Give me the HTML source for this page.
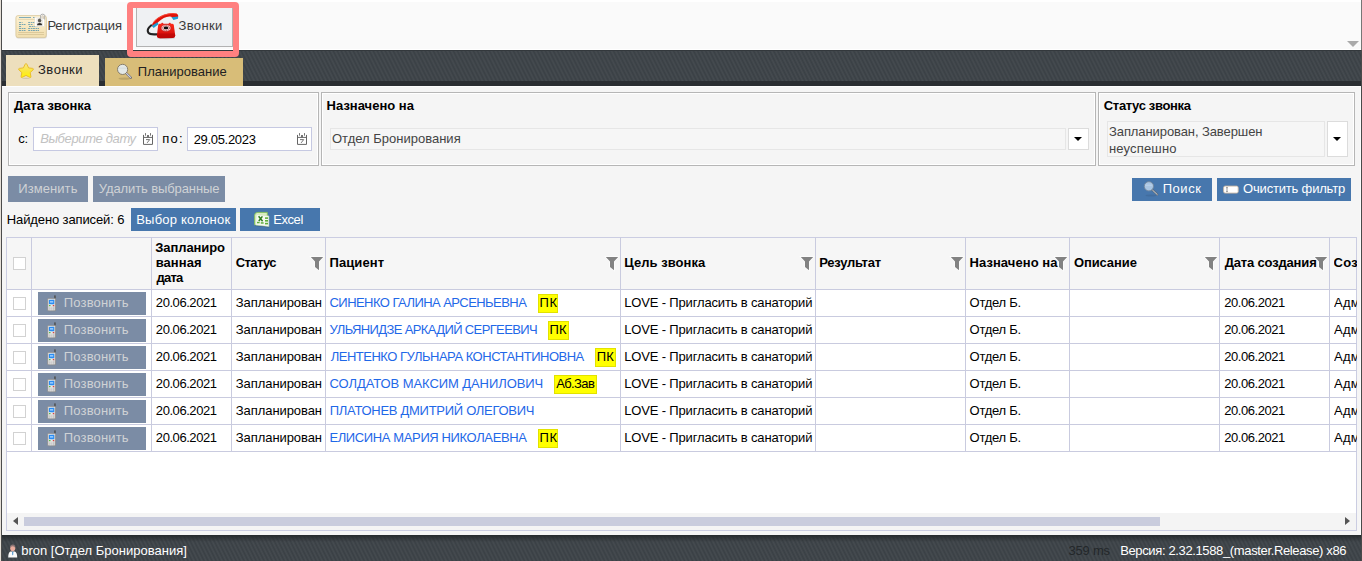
<!DOCTYPE html>
<html lang="ru"><head><meta charset="utf-8"><title>Звонки</title>
<style>
html,body{margin:0;padding:0}
body{width:1362px;height:561px;overflow:hidden;position:relative;background:#f5f5f5;
 font-family:"Liberation Sans",sans-serif;font-size:13px;color:#000}
div,span{box-sizing:border-box}
.a{position:absolute}
.t{position:absolute;white-space:nowrap;line-height:16px;height:16px;font-size:13px;display:block}
.tg{color:#3a3a3a}
.tt{color:#222}
.b{font-weight:bold;color:#000}
.n{color:#000}
.ph{font-style:italic;color:#c2c2c2}
.sg{color:#444}
.bd{color:#cfd2d5}
.bw{color:#fff}
.lk{color:#1f68e8}
.w{color:#fff}
.dim{color:#23272a}
.hatch{background-color:#3a4045;background-image:repeating-linear-gradient(63.4deg,rgba(255,255,255,0) 0,rgba(255,255,255,.06) 1.79px,rgba(255,255,255,0) 3.58px)}
.panel{position:absolute;top:92px;height:74px;border:1px solid #b6b6b6;box-shadow:inset 0 0 0 1px #fff}
.inp{position:absolute;top:127px;height:24px;width:125px;background:#fff;border:1px solid #c6c9e2}
.seld{position:absolute;border:1px solid #e6e6e6;background:#f6f6f6}
.selb{position:absolute;border:1px solid #dcdcdc;background:#fff}
.selb:after{content:"";position:absolute;left:50%;top:50%;margin:-2px 0 0 -4.5px;border:4.5px solid transparent;border-top:4.5px solid #000;border-bottom:0}
.btn{position:absolute;background:#4777ad}
.btn.dis{background:#7b8ca5}
.vl{position:absolute;width:1px;background:#c9cbdf;top:237px;height:215px}
.hl{position:absolute;height:1px;background:#c9cbdf;left:6px;width:1351px}
.cb{position:absolute;left:13px;width:13px;height:13px;background:#fff;border:1px solid #d2d2d2}
.lab{position:absolute;height:19px;background:#ffff00;border:1px solid #e2e200}
svg{position:absolute;overflow:visible}

</style></head>
<body>
<!-- top toolbar -->
<div class="a" style="left:0;top:0;width:1362px;height:50px;background:#fafafa;border-top:2px solid #fff;border-bottom:1px solid #fff"></div>
<div class="a" style="left:136px;top:4px;width:97px;height:43px;background:#eff1f3;border:1px solid #b2b2b2"></div>
<div class="a" style="left:1347px;top:41px;width:0;height:0;border:6px solid transparent;border-top:6px solid #aaa;border-bottom:0"></div>
<!-- dark bar -->
<div class="a hatch" style="left:0;top:50px;width:1362px;height:36px;border-bottom:5px solid #2a2e32;border-top:1px solid #33383c"></div>
<div class="a" style="left:6px;top:55px;width:93px;height:31px;background:#eddfbd"></div>
<div class="a" style="left:105px;top:58px;width:138px;height:28px;background:#d8bd78"></div>
<div class="a" style="left:0;top:86px;width:1362px;height:1px;background:#fdfdfd"></div>
<!-- highlight -->
<div class="a" style="left:127px;top:2px;width:112px;height:55px;border:6px solid #ff8080;border-radius:4px"></div>
<!-- panels -->
<div class="panel" style="left:8px;width:311px"></div>
<div class="panel" style="left:321px;width:775px"></div>
<div class="panel" style="left:1098px;width:257px"></div>
<div class="inp" style="left:33px"></div>
<div class="inp" style="left:187px"></div>
<div class="seld" style="left:330px;top:128px;width:736px;height:22px"></div>
<div class="selb" style="left:1068px;top:128px;width:21px;height:22px"></div>
<div class="seld" style="left:1107px;top:121px;width:218px;height:36px"></div>
<div class="selb" style="left:1327px;top:121px;width:21px;height:36px"></div>
<!-- buttons -->
<div class="btn dis" style="left:8px;top:176px;width:80px;height:26px"></div>
<div class="btn dis" style="left:93px;top:176px;width:132px;height:26px"></div>
<div class="btn" style="left:1132px;top:178px;width:80px;height:23px"></div>
<div class="btn" style="left:1217px;top:178px;width:134px;height:23px"></div>
<div class="btn" style="left:131px;top:208px;width:105px;height:23px"></div>
<div class="btn" style="left:240px;top:208px;width:80px;height:23px"></div>
<!-- table -->
<div class="a" style="left:6px;top:237px;width:1351px;height:294px;background:#fff;border:1px solid #cbcde2"></div>
<div class="a" style="left:7px;top:238px;width:1349px;height:51px;background:#f6f6f6"></div>
<div class="a" style="left:7px;top:513px;width:1349px;height:17px;background:#f4f4f4"></div>
<div class="a" style="left:24px;top:517px;width:1136px;height:9px;background:#c9ccdd"></div>
<div class="a" style="left:13px;top:517px;width:0;height:0;border:4.5px solid transparent;border-right:5.5px solid #555;border-left:0"></div>
<div class="a" style="left:1345px;top:517px;width:0;height:0;border:4.5px solid transparent;border-left:5.5px solid #555;border-right:0"></div>
<div class="vl" style="left:31px"></div><div class="vl" style="left:151px"></div><div class="vl" style="left:231px"></div>
<div class="vl" style="left:325px"></div><div class="vl" style="left:620px"></div><div class="vl" style="left:815px"></div>
<div class="vl" style="left:965px"></div><div class="vl" style="left:1069px"></div><div class="vl" style="left:1219px"></div>
<div class="vl" style="left:1329px"></div>
<div class="hl" style="top:289px"></div><div class="hl" style="top:316px"></div><div class="hl" style="top:343px"></div>
<div class="hl" style="top:370px"></div><div class="hl" style="top:397px"></div><div class="hl" style="top:424px"></div>
<div class="hl" style="top:451px"></div>
<div class="cb" style="top:257px"></div>
<div class="cb" style="top:297px"></div><div class="cb" style="top:324px"></div><div class="cb" style="top:351px"></div>
<div class="cb" style="top:378px"></div><div class="cb" style="top:405px"></div><div class="cb" style="top:432px"></div>
<div class="btn dis" style="left:38px;top:292px;width:108px;height:23px"></div>
<div class="btn dis" style="left:38px;top:319px;width:108px;height:23px"></div>
<div class="btn dis" style="left:38px;top:346px;width:108px;height:23px"></div>
<div class="btn dis" style="left:38px;top:373px;width:108px;height:23px"></div>
<div class="btn dis" style="left:38px;top:400px;width:108px;height:23px"></div>
<div class="btn dis" style="left:38px;top:427px;width:108px;height:23px"></div>
<div class="lab" style="left:538px;top:294px;width:20px"></div>
<div class="lab" style="left:548px;top:321px;width:21px"></div>
<div class="lab" style="left:595px;top:348px;width:21px"></div>
<div class="lab" style="left:554px;top:375px;width:43px"></div>
<div class="lab" style="left:538px;top:429px;width:20px"></div>
<!-- status bar -->
<div class="a hatch" style="left:0;top:535px;width:1362px;height:26px"></div>
<div class="a" style="left:0;top:535px;width:1362px;height:7px;background:linear-gradient(#262a2d,rgba(38,42,45,0))"></div>
<!-- ICONS -->
<svg style="left:0;top:0" width="1362" height="561" viewBox="0 0 1362 561">
<defs>
<linearGradient id="gcard" x1="0" y1="0" x2="0" y2="1"><stop offset="0" stop-color="#fdf1d3"/><stop offset="1" stop-color="#f1deae"/></linearGradient>
<linearGradient id="gstar" x1="0" y1="0" x2="0" y2="1"><stop offset="0" stop-color="#f9e58a"/><stop offset=".55" stop-color="#fbe83a"/><stop offset="1" stop-color="#fff200"/></linearGradient>
<linearGradient id="gred" x1="0" y1="0" x2="0" y2="1"><stop offset="0" stop-color="#ff2a1a"/><stop offset="1" stop-color="#c80808"/></linearGradient>
<linearGradient id="gmob" x1="0" y1="0" x2="1" y2="0"><stop offset="0" stop-color="#c8c8c8"/><stop offset=".3" stop-color="#f2f2f2"/><stop offset="1" stop-color="#d0d0d0"/></linearGradient>
<g id="funnel"><path d="M-0.2,-0.1H12.2L8,4.5V13.2L4,9.9V4.5Z" fill="#828282" stroke="#fff" stroke-opacity=".8" stroke-width="1.4" paint-order="stroke"/></g>
<g id="cal" fill="none" stroke="#666">
 <path d="M0.5,1.9V11.4H9.5V1.9" stroke-width="1"/>
 <path d="M0.5,4.4H9.5" stroke-width="1"/>
 <path d="M2.5,0.1V2.7M7.5,0.1V2.7" stroke-width=".9"/>
 <rect x="4.2" y="2" width="1.6" height="2.2" fill="#555" stroke="none"/>
 <path d="M3,6.6H6.7L4.1,9.9" stroke-width=".9" stroke="#666"/>
</g>
<g id="mob">
 <rect x="7.2" y="0" width="1.5" height="4" fill="#4e4e4e"/><rect x="8" y="3.4" width="1" height="11.8" fill="#6a6a6a"/>
 <rect x="0.6" y="3" width="8" height="12.4" rx="0.8" fill="url(#gmob)" stroke="#8e8e8e" stroke-width=".8"/>
 <rect x="1.9" y="4.4" width="5.4" height="4.4" rx=".6" fill="#2b8cf2"/>
 <rect x="3" y="5.7" width="3.2" height="1.5" fill="#9fd0ff"/>
 <rect x="2" y="9.6" width="1.8" height="1.2" fill="#58c040"/>
 <rect x="5.6" y="9.6" width="1.6" height="1.2" fill="#e04040"/>
 <path d="M2,11.8H7.2M2,13.2H7.2M2,14.4H7.2" stroke="#b4b4b4" stroke-width=".7"/>
 <path d="M3.8,9.6V14.8M5.5,9.6V14.8" stroke="#e6e6e6" stroke-width=".5"/>
</g>
</defs>
<!-- registration card -->
<g>
 <rect x="16.2" y="16.6" width="30.6" height="22" rx="2.2" fill="#000" opacity=".13"/>
 <rect x="15.9" y="15.6" width="30.4" height="22" rx="2.2" fill="url(#gcard)" stroke="#d8c79c" stroke-width=".8"/>
 <path d="M19,17.5H31M33,17.5H35" stroke="#4a8fae" stroke-width=".7"/>
 <path d="M18.2,19.4H35" stroke="#dccba0" stroke-width=".7"/>
 <g stroke="#3f89ad" stroke-width=".7" stroke-dasharray="2 .7 1.5 .5">
  <path d="M19,22.5H22.5M28.2,22.5H34.5"/><path d="M19,24.5H25.5M28.2,24.5H33"/><path d="M19,26.5H21.8M29,26.5H37.5"/>
  <path d="M19,28.5H25.5M28.2,28.5H39"/><path d="M19,30.5H25.5M28.2,30.5H39"/>
 </g>
 <path d="M18.2,32.5H44M18.2,34.5H44" stroke="#d6c393" stroke-width=".8"/>
 <rect x="34.8" y="17.2" width="9.6" height="9.3" fill="#fff" stroke="#e4dcc8" stroke-width=".5"/>
 <rect x="36.4" y="18.2" width="6.6" height="7.2" fill="#ecebe6"/>
 <ellipse cx="39.6" cy="20.6" rx="1.7" ry="2" fill="#5c5a55"/>
 <path d="M36.9,25.2Q37,22.9 39.6,22.9Q42.2,22.9 42.3,25.2Z" fill="#2e2d2b"/>
 <path d="M40.6,19.2V15.6Q40.6,14.2 42.6,14.2Q44.7,14.2 44.7,15.6V19.6" fill="#f4f4f2" stroke="#9c9c9c" stroke-width=".8"/>
 <path d="M42,18.6V16.4Q42,15.7 42.7,15.7Q43.4,15.7 43.4,16.4V18.9" fill="none" stroke="#c9b89a" stroke-width=".7"/>
</g>
<!-- red phone -->
<g>
 <path d="M151.3,25.3Q146.2,29.5 148.3,32.6Q150.2,35 157.4,34.2" fill="none" stroke="#222" stroke-width="2.1" stroke-linecap="round"/>
 <ellipse cx="166" cy="38" rx="9" ry="1.2" fill="#000" opacity=".15"/>
 <path d="M159.8,23.8H172.2Q173.4,23.8 173.8,25L175.2,35.2Q175.4,37.6 173,38L160,38.2Q156.6,38 156.9,35.2L158.2,25Q158.5,23.8 159.8,23.8Z" fill="url(#gred)"/>
 <path d="M157.3,33.6L174.9,33.4L175.2,35.6Q175.2,37.6 173,38L160,38.2Q156.8,38 156.9,35.6Z" fill="#b50505" opacity=".55"/>
 <path d="M161.6,23.9V23.2H163V23.9M169,23.9V23.2H170.4V23.9" fill="#e01010" stroke="#e01010" stroke-width=".5"/>
 <ellipse cx="166" cy="28" rx="5" ry="3.6" fill="#f3c4c4" stroke="#c01818" stroke-width=".6"/>
 <ellipse cx="166" cy="28" rx="3.6" ry="2.5" fill="none" stroke="#a32626" stroke-width=".7" stroke-dasharray="1 .8"/>
 <ellipse cx="166" cy="27.9" rx="2.3" ry="1.3" fill="#0a0a0a"/>
 <path d="M151.8,26.2Q152,22 157.5,18Q164,13.6 172.5,13.1Q176.6,12.9 177.8,14.6Q178.5,15.8 178,17.4L172.2,17.9Q171.6,16.5 169.5,16.6Q163.5,17.2 158.6,21.8L156.2,24.6L153.3,26.6Z" fill="#e01208"/>
 <path d="M153.2,22.8Q157,17.6 164,15Q171,12.8 176.8,13.6" fill="none" stroke="#ff5a48" stroke-width=".9" opacity=".8"/>
 <path d="M151.9,25.8L157.4,22.2L158.6,24.3L153.6,27.9Z" fill="#1b9fd6"/>
 <path d="M171.6,17.2L178.2,16.6L178,18.8L173.4,19.9Z" fill="#1b9fd6"/>
</g>
<!-- star -->
<path d="M26,63.6Q26.6,63.6 27,64.5L28.6,67.9L32.6,68.4Q34.2,68.7 33,69.9L30.2,72.6L30.9,76.4Q31.1,78 29.7,77.3L26,75.4L22.3,77.3Q20.9,78 21.1,76.4L21.8,72.6L19,69.9Q17.8,68.7 19.4,68.4L23.4,67.9L25,64.5Q25.4,63.6 26,63.6Z" fill="url(#gstar)" stroke="#e9bd2c" stroke-width="1"/>
<ellipse cx="26" cy="78.3" rx="4" ry=".6" fill="#000" opacity=".12"/>
<!-- magnifier tab -->
<g>
 <ellipse cx="124.5" cy="78.6" rx="6" ry="1.1" fill="#000" opacity=".13"/>
 <path d="M126.2,73.1L130.9,77.8" stroke="#6c6c74" stroke-width="2.2" stroke-linecap="round"/>
 <path d="M126.4,73.3L130.8,77.7" stroke="#d4d4e0" stroke-width="1.1" stroke-linecap="round" stroke-dasharray=".9 .7"/>
 <circle cx="122.6" cy="69.4" r="5.1" fill="#e3e8e6" stroke="#7f7563" stroke-width=".9"/>
 <path d="M118.6,68.2H126.6" stroke="#cfd8da" stroke-width=".8"/>
</g>
<!-- magnifier search btn -->
<g>
 <ellipse cx="1151" cy="195.5" rx="5.5" ry="1" fill="#000" opacity=".08"/>
 <path d="M1152.2,189.8L1157.3,194.6" stroke="#5f6973" stroke-width="2" stroke-linecap="round"/>
 <path d="M1152.6,190.2L1157.2,194.5" stroke="#d8dde4" stroke-width=".9" stroke-linecap="round"/>
 <circle cx="1148.9" cy="186.3" r="4.6" fill="#a9c5e2" stroke="#74879c" stroke-width=".9"/>
 <path d="M1145.3,185.2H1152.5" stroke="#c4d8ee" stroke-width=".8"/>
</g>
<!-- clear icon -->
<rect x="1223.6" y="186.1" width="14.6" height="7" rx="1.6" fill="#fff" stroke="#c9b8a4" stroke-width=".9"/>
<path d="M1226.2,187.6H1227.8M1227,187.6V191.6M1226.2,191.6H1227.8" stroke="#555" stroke-width=".6" fill="none"/>
<!-- excel -->
<g>
 <path d="M255,225.6L269,227" stroke="#000" stroke-width="1" opacity=".2"/>
 <path d="M254.6,224.8V215.5Q254.6,212.4 257.8,212.4H267.3V224.8Z" fill="#d8edc0" stroke="#86c257" stroke-width=".9"/>
 <path d="M256.3,214.6L268.9,215.9V226.6L255.6,225Z" fill="#f5f9f0" stroke="#c6dfb2" stroke-width=".5"/>
 <g fill="#5fae3a">
  <rect x="265" y="217.3" width="3" height="1.6"/><rect x="265" y="220" width="3" height="1.6"/><rect x="265" y="222.8" width="3" height="1.6"/>
  <rect x="257" y="221.8" width="2.6" height="1.5"/><rect x="260.8" y="222.2" width="2.8" height="1.5"/>
 </g>
 <path d="M258.6,216.2L262.6,221.2M262.4,216.4L258.8,221" stroke="#2f7d1e" stroke-width="1.5"/>
</g>
<!-- calendar icons -->
<use href="#cal" x="143" y="133"/><use href="#cal" x="297" y="133"/>
<!-- funnels -->
<use href="#funnel" x="311" y="257"/><use href="#funnel" x="606" y="257"/><use href="#funnel" x="801" y="257"/>
<use href="#funnel" x="951" y="257"/><use href="#funnel" x="1055" y="257"/><use href="#funnel" x="1205" y="257"/>
<use href="#funnel" x="1315" y="257"/>
<!-- mobiles -->
<use href="#mob" x="47" y="295.4"/><use href="#mob" x="47" y="322.4"/><use href="#mob" x="47" y="349.4"/>
<use href="#mob" x="47" y="376.4"/><use href="#mob" x="47" y="403.4"/><use href="#mob" x="47" y="430.4"/>
<!-- user -->
<g>
 <path d="M8.2,557.6Q8.2,552.6 10.4,551.6L14.9,551.6Q17.2,552.6 17.2,557.6Z" fill="#fafafa"/>
 <path d="M12,551.6H13.4L13.2,554.6L12.7,555.4L12.2,554.6Z" fill="#5b9bd0"/>
 <ellipse cx="12.7" cy="548.2" rx="2.5" ry="3" fill="#e9ab9c"/>
 <path d="M10.1,548Q9.9,544.6 12.7,544.5Q15.5,544.6 15.3,548Q14.6,546.2 12.7,546.2Q10.8,546.2 10.1,548Z" fill="#8d7676"/>
</g>
</svg>
<!-- window edges -->
<div class="a" style="left:1361px;top:0;width:1px;height:50px;background:#767676"></div>
<div class="a" style="left:1361px;top:50px;width:1px;height:511px;background:#4a4a4a"></div>
<div class="a" style="left:1360px;top:87px;width:1px;height:448px;background:#fdfdfd"></div>
<div class="a" style="left:0;top:0;width:1px;height:561px;background:#e6e0d8"></div>
<div class="a" style="left:1px;top:0;width:1px;height:561px;background:#4c4c4c"></div>

<div id="texts">
<span class="t tg" id="top1" style="left:47.41px;top:17.50px;letter-spacing:-0.144px">Регистрация</span>
<span class="t tg" id="top2" style="left:178.46px;top:17.50px;letter-spacing:0.380px">Звонки</span>
<span class="t tt" id="tab1" style="left:38.00px;top:61.50px;letter-spacing:0.520px">Звонки</span>
<span class="t tt" id="tab2" style="left:137.84px;top:63.50px;letter-spacing:0.014px">Планирование</span>
<span class="t b" id="p1" style="left:14.01px;top:97.50px;letter-spacing:-0.061px">Дата звонка</span>
<span class="t n" id="ls" style="left:18.32px;top:130.50px;letter-spacing:-0.278px">с:</span>
<span class="t ph" id="ph" style="left:40.13px;top:130.50px;letter-spacing:-0.370px">Выберите дату</span>
<span class="t n" id="lpo" style="left:162.36px;top:130.50px;letter-spacing:1.169px">по:</span>
<span class="t n" id="d2" style="left:193.64px;top:131.50px;letter-spacing:-0.314px">29.05.2023</span>
<span class="t b" id="p2" style="left:326.62px;top:97.50px;letter-spacing:-0.000px">Назначено на</span>
<span class="t sg" id="sel1" style="left:332.00px;top:130.50px;letter-spacing:0.006px">Отдел Бронирования</span>
<span class="t b" id="p3" style="left:1103.84px;top:97.50px;letter-spacing:-0.345px">Статус звонка</span>
<span class="t sg" id="sel2a" style="left:1109.00px;top:124.00px;letter-spacing:-0.090px">Запланирован, Завершен</span>
<span class="t sg" id="sel2b" style="left:1109.00px;top:141.00px;letter-spacing:0.163px">неуспешно</span>
<span class="t bd" id="b1" style="left:18.21px;top:180.50px;letter-spacing:0.083px">Изменить</span>
<span class="t bd" id="b2" style="left:98.78px;top:180.50px;letter-spacing:-0.104px">Удалить выбранные</span>
<span class="t n" id="found" style="left:6.80px;top:211.50px;letter-spacing:-0.116px">Найдено записей: 6</span>
<span class="t bw" id="b3" style="left:136.21px;top:211.50px;letter-spacing:0.213px">Выбор колонок</span>
<span class="t bw" id="b4" style="left:273.22px;top:211.50px;letter-spacing:-0.434px">Excel</span>
<span class="t bw" id="b5" style="left:1162.70px;top:180.50px;letter-spacing:0.556px">Поиск</span>
<span class="t bw" id="b6" style="left:1243.06px;top:180.50px;letter-spacing:-0.181px">Очистить фильтр</span>
<span class="t b" id="h1a" style="left:155.30px;top:240.00px;letter-spacing:-0.098px">Запланиро</span>
<span class="t b" id="h1b" style="left:155.68px;top:255.00px;letter-spacing:0.065px">ванная</span>
<span class="t b" id="h1c" style="left:156.40px;top:270.00px;letter-spacing:-0.727px">дата</span>
<span class="t b" id="h2" style="left:235.84px;top:255.00px;letter-spacing:-0.641px">Статус</span>
<span class="t b" id="h3" style="left:329.48px;top:255.00px;letter-spacing:0.094px">Пациент</span>
<span class="t b" id="h4" style="left:624.26px;top:255.00px;letter-spacing:0.034px">Цель звонка</span>
<span class="t b" id="h5" style="left:819.26px;top:255.00px;letter-spacing:-0.258px">Результат</span>
<span class="t b" id="h6" style="left:969.48px;top:255.00px;letter-spacing:0.067px">Назначено на</span>
<span class="t b" id="h7" style="left:1073.88px;top:255.00px;letter-spacing:-0.089px">Описание</span>
<span class="t b" id="h8" style="left:1224.67px;top:255.00px;letter-spacing:-0.168px">Дата создания</span>
<span class="t b" id="h9" style="left:1333.61px;top:255.00px;letter-spacing:0.300px;width:23.39px;overflow:hidden">Соз</span>
<span class="t bd" id="r0call" style="left:63.84px;top:295.00px;letter-spacing:0.157px">Позвонить</span>
<span class="t n" id="r0d" style="left:155.85px;top:295.00px;letter-spacing:-0.437px">20.06.2021</span>
<span class="t n" id="r0s" style="left:235.85px;top:295.00px;letter-spacing:-0.078px">Запланирован</span>
<span class="t lk" id="r0n" style="left:329.52px;top:295.00px;letter-spacing:-0.553px">СИНЕНКО ГАЛИНА АРСЕНЬЕВНА</span>
<span class="t n" id="r0l" style="left:539.58px;top:295.00px;letter-spacing:0.607px">ПК</span>
<span class="t n" id="r0g" style="left:624.15px;top:295.00px;letter-spacing:-0.155px">LOVE - Пригласить в санаторий</span>
<span class="t n" id="r0o" style="left:969.61px;top:295.00px;letter-spacing:-0.276px">Отдел Б.</span>
<span class="t n" id="r0c" style="left:1224.26px;top:295.00px;letter-spacing:-0.456px">20.06.2021</span>
<span class="t n" id="r0a" style="left:1333.98px;top:295.00px;letter-spacing:0.300px;width:23.02px;overflow:hidden">Адм</span>
<span class="t bd" id="r1call" style="left:63.84px;top:322.00px;letter-spacing:0.157px">Позвонить</span>
<span class="t n" id="r1d" style="left:155.85px;top:322.00px;letter-spacing:-0.437px">20.06.2021</span>
<span class="t n" id="r1s" style="left:235.85px;top:322.00px;letter-spacing:-0.078px">Запланирован</span>
<span class="t lk" id="r1n" style="left:329.62px;top:322.00px;letter-spacing:-0.625px">УЛЬЯНИДЗЕ АРКАДИЙ СЕРГЕЕВИЧ</span>
<span class="t n" id="r1l" style="left:549.38px;top:322.00px;letter-spacing:0.378px">ПК</span>
<span class="t n" id="r1g" style="left:624.15px;top:322.00px;letter-spacing:-0.155px">LOVE - Пригласить в санаторий</span>
<span class="t n" id="r1o" style="left:969.61px;top:322.00px;letter-spacing:-0.276px">Отдел Б.</span>
<span class="t n" id="r1c" style="left:1224.26px;top:322.00px;letter-spacing:-0.456px">20.06.2021</span>
<span class="t n" id="r1a" style="left:1333.98px;top:322.00px;letter-spacing:0.300px;width:23.02px;overflow:hidden">Адм</span>
<span class="t bd" id="r2call" style="left:63.84px;top:349.00px;letter-spacing:0.157px">Позвонить</span>
<span class="t n" id="r2d" style="left:155.85px;top:349.00px;letter-spacing:-0.437px">20.06.2021</span>
<span class="t n" id="r2s" style="left:235.85px;top:349.00px;letter-spacing:-0.078px">Запланирован</span>
<span class="t lk" id="r2n" style="left:330.71px;top:349.00px;letter-spacing:-0.491px">ЛЕНТЕНКО ГУЛЬНАРА КОНСТАНТИНОВНА</span>
<span class="t n" id="r2l" style="left:596.72px;top:349.00px;letter-spacing:0.251px">ПК</span>
<span class="t n" id="r2g" style="left:624.15px;top:349.00px;letter-spacing:-0.155px">LOVE - Пригласить в санаторий</span>
<span class="t n" id="r2o" style="left:969.61px;top:349.00px;letter-spacing:-0.276px">Отдел Б.</span>
<span class="t n" id="r2c" style="left:1224.26px;top:349.00px;letter-spacing:-0.456px">20.06.2021</span>
<span class="t n" id="r2a" style="left:1333.98px;top:349.00px;letter-spacing:0.300px;width:23.02px;overflow:hidden">Адм</span>
<span class="t bd" id="r3call" style="left:63.84px;top:376.00px;letter-spacing:0.157px">Позвонить</span>
<span class="t n" id="r3d" style="left:155.85px;top:376.00px;letter-spacing:-0.437px">20.06.2021</span>
<span class="t n" id="r3s" style="left:235.85px;top:376.00px;letter-spacing:-0.078px">Запланирован</span>
<span class="t lk" id="r3n" style="left:329.52px;top:376.00px;letter-spacing:-0.071px">СОЛДАТОВ МАКСИМ ДАНИЛОВИЧ</span>
<span class="t n" id="r3l" style="left:556.23px;top:376.00px;letter-spacing:-0.624px">Аб.Зав</span>
<span class="t n" id="r3g" style="left:624.15px;top:376.00px;letter-spacing:-0.155px">LOVE - Пригласить в санаторий</span>
<span class="t n" id="r3o" style="left:969.61px;top:376.00px;letter-spacing:-0.276px">Отдел Б.</span>
<span class="t n" id="r3c" style="left:1224.26px;top:376.00px;letter-spacing:-0.456px">20.06.2021</span>
<span class="t n" id="r3a" style="left:1333.98px;top:376.00px;letter-spacing:0.300px;width:23.02px;overflow:hidden">Адм</span>
<span class="t bd" id="r4call" style="left:63.84px;top:403.00px;letter-spacing:0.157px">Позвонить</span>
<span class="t n" id="r4d" style="left:155.85px;top:403.00px;letter-spacing:-0.437px">20.06.2021</span>
<span class="t n" id="r4s" style="left:235.85px;top:403.00px;letter-spacing:-0.078px">Запланирован</span>
<span class="t lk" id="r4n" style="left:329.69px;top:403.00px;letter-spacing:-0.279px">ПЛАТОНЕВ ДМИТРИЙ ОЛЕГОВИЧ</span>
<span class="t n" id="r4g" style="left:624.15px;top:403.00px;letter-spacing:-0.155px">LOVE - Пригласить в санаторий</span>
<span class="t n" id="r4o" style="left:969.61px;top:403.00px;letter-spacing:-0.276px">Отдел Б.</span>
<span class="t n" id="r4c" style="left:1224.26px;top:403.00px;letter-spacing:-0.456px">20.06.2021</span>
<span class="t n" id="r4a" style="left:1333.98px;top:403.00px;letter-spacing:0.300px;width:23.02px;overflow:hidden">Адм</span>
<span class="t bd" id="r5call" style="left:63.84px;top:430.00px;letter-spacing:0.157px">Позвонить</span>
<span class="t n" id="r5d" style="left:155.85px;top:430.00px;letter-spacing:-0.437px">20.06.2021</span>
<span class="t n" id="r5s" style="left:235.85px;top:430.00px;letter-spacing:-0.078px">Запланирован</span>
<span class="t lk" id="r5n" style="left:329.41px;top:430.00px;letter-spacing:-0.377px">ЕЛИСИНА МАРИЯ НИКОЛАЕВНА</span>
<span class="t n" id="r5l" style="left:539.58px;top:430.00px;letter-spacing:0.607px">ПК</span>
<span class="t n" id="r5g" style="left:624.15px;top:430.00px;letter-spacing:-0.155px">LOVE - Пригласить в санаторий</span>
<span class="t n" id="r5o" style="left:969.61px;top:430.00px;letter-spacing:-0.276px">Отдел Б.</span>
<span class="t n" id="r5c" style="left:1224.26px;top:430.00px;letter-spacing:-0.456px">20.06.2021</span>
<span class="t n" id="r5a" style="left:1333.98px;top:430.00px;letter-spacing:0.300px;width:23.02px;overflow:hidden">Адм</span>
<span class="t w" id="st1" style="left:21.15px;top:543.00px;letter-spacing:0.017px">bron [Отдел Бронирования]</span>
<span class="t dim" id="st2" style="left:1068.57px;top:543.00px;letter-spacing:-0.243px">359 ms</span>
<span class="t w" id="st3" style="left:1120.15px;top:543.00px;letter-spacing:-0.362px">Версия: 2.32.1588_(master.Release) x86</span>
</div>
</body></html>
